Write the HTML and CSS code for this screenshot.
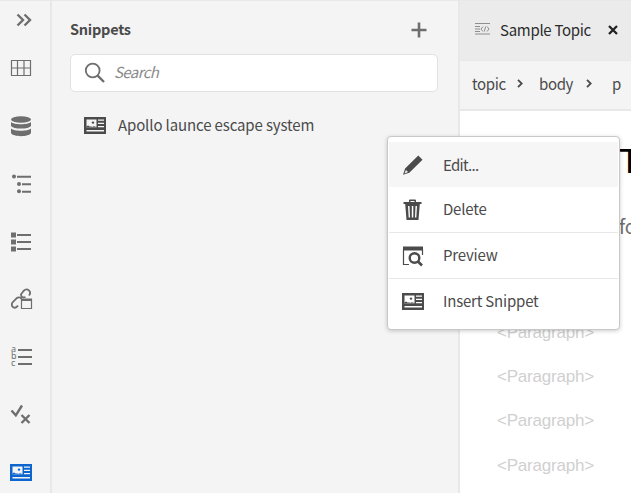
FILE: index.html
```html
<!DOCTYPE html>
<html lang="en">
<head>
<meta charset="utf-8">
<title>Snippets</title>
<link rel="stylesheet" href="styles.css">
</head>
<body>
<svg class="defs" width="0" height="0" aria-hidden="true">
  <symbol id="snippet" viewBox="0 0 22 17">
    <path fill="currentColor" fill-rule="evenodd" d="M0 0h22v17H0zM2.500 2.500v8h10v-8zM14 2.500v1.300h6V2.500zM14 5.800v1.300h6V5.800zM14 9v1.300h6V9zM2.500 13v1.400h17.500V13z"/>
    <path fill="currentColor" d="M2.500 10.500V9.300l1.600-.8L6 9.800l1-.5 1.200.6 1.500-.6 2.800.7v.5z"/>
    <circle cx="9" cy="5.600" r="1.200" fill="currentColor"/>
  </symbol>
</svg>
<div class="app">
  <nav class="rail">
    <div class="rail-item expand"><svg width="24" height="24" viewBox="0 0 24 24"><path d="M5.500 6.500 11 12l-5.500 5.500M12.500 6.500 18 12l-5.500 5.500" class="line thick"/></svg></div>
    <div class="rail-item"><svg width="24" height="24" viewBox="0 0 24 24"><path d="M2.500 4.500h19v15h-19zM2.500 12h19M8.500 4.500v15M15 4.500v15" class="line thin"/></svg></div>
    <div class="rail-item"><svg width="24" height="24" viewBox="0 0 24 24"><ellipse cx="12" cy="5.500" rx="10" ry="3.200"/><path d="M2 8c3 3 17 3 20 0v4c-2 3.400-18 3.400-20 0zM2 14.500c3 3 17 3 20 0v4.600c-2 4.200-18 4.200-20 0z"/></svg></div>
    <div class="rail-item"><svg width="24" height="24" viewBox="0 0 24 24"><circle cx="5" cy="4.500" r="2"/><circle cx="10" cy="12" r="2"/><circle cx="10" cy="19.300" r="2"/><path d="M8 3.800h14v2H8zM13 11.300h9v2h-9zM13 18.800h9v2h-9z"/></svg></div>
    <div class="rail-item"><svg width="24" height="24" viewBox="0 0 24 24"><path d="M2 2.500h5v5H2zM2 9.500h5v5H2zM2 16.500h5v5H2zM8 4h14v2H8zM8 11h14v2H8zM8 18h14v2H8z"/></svg></div>
    <div class="rail-item"><svg width="24" height="24" viewBox="0 0 24 24"><path d="m11.500 8 3-4c4-4 8.500 1 5.500 4.500M9 18.500c-3 4.500-8 1-5.500-3l4-4.200c2.500-2 5-.5 5 1M12 7.500c0 2.500 2 3.500 4.500 2.500" class="line"/><path d="M12.500 12.500h10v9h-10z" class="line thin"/><path d="M12 11.500h11v2.500H12z"/></svg></div>
    <div class="rail-item list">
      <div class="letters"><span>a</span><span>b</span><span>c</span></div>
      <svg width="14" height="24" viewBox="0 0 14 24"><path d="M0 4h14v2H0zM0 11h14v2H0zM0 18h14v2H0z"/></svg>
    </div>
    <div class="rail-item"><svg width="24" height="24" viewBox="0 0 24 24"><path d="m2.500 7.500 4.300 4.800L13 2.500M12.500 12l8 8M20.500 12l-8 8" class="line thick"/></svg></div>
    <div class="rail-item active"><svg width="22" height="17"><use href="#snippet"/></svg></div>
  </nav>

  <section class="panel">
    <header class="panel-head">
      <h2>Snippets</h2>
      <svg width="16" height="16" viewBox="0 0 16 16"><path d="M8 .5v15M.5 8h15" class="line plus"/></svg>
    </header>
    <div class="search">
      <svg width="22" height="22" viewBox="0 0 22 22"><circle cx="8.700" cy="8.500" r="6.900" class="line"/><path d="m13.500 13.500 6.500 6.500" class="line thick"/></svg>
      <span>Search</span>
    </div>
    <div class="snippet"><svg width="22" height="17"><use href="#snippet"/></svg><span>Apollo launce escape system</span></div>
  </section>

  <main class="editor">
    <div class="tabs">
      <svg width="15" height="12" viewBox="0 0 15 12"><path d="M0 .5h15M0 3.500h5M0 6h5M0 8.500h5M0 11h15M8 3.500 6 6l2 2.500M12 3.500 14 6l-2 2.500M10.700 3.500 9.300 8.500" class="line doc"/></svg>
      <span class="tab-name">Sample Topic</span>
      <svg width="10" height="10" viewBox="0 0 10 10"><path d="m1 1 8 8M9 1 1 9" class="line close"/></svg>
    </div>
    <div class="crumbs">
      <span class="topic">topic</span><svg width="6" height="9" viewBox="0 0 6 9"><path d="m1 .8 3.700 3.700L1 8.200" class="line"/></svg>
      <span class="body-crumb">body</span><svg width="6" height="9" viewBox="0 0 6 9"><path d="m1 .8 3.700 3.700L1 8.200" class="line"/></svg>
      <span class="p-crumb">p</span>
    </div>
    <article class="page">
      <h1>Topic</h1>
      <p class="desc">for</p>
      <p class="hint">&lt;Paragraph&gt;</p>
      <p class="hint">&lt;Paragraph&gt;</p>
      <p class="hint">&lt;Paragraph&gt;</p>
      <p class="hint">&lt;Paragraph&gt;</p>
    </article>
  </main>
</div>

<div class="menu">
  <div class="menu-item hover"><svg width="24" height="24" viewBox="0 0 24 24"><path fill-rule="evenodd" d="M17.300 2.500 21.500 6.700 8.300 19.800 2 21.800 4.100 15.600zM5 17l-1.600 3.400L7 19z"/></svg><span class="dots">Edit...</span></div>
  <div class="menu-item"><svg width="24" height="24" viewBox="0 0 24 24"><path fill-rule="evenodd" d="M8 4V2.500Q8 1.500 9 1.500h5q1 0 1 1V4h5.500v2h-1.700L17.500 22h-12L4.200 6H2.500V4zM9.500 3v1h4V3zM7 8l.7 11.500H9L8.500 8zM10.800 8v11.500h1.500V8zM14.500 8 14 19.500h1.300L16 8z"/></svg><span>Delete</span></div>
  <div class="menu-item divided"><svg width="24" height="24" viewBox="0 0 24 24"><path d="M2 2.500h20v4H2z"/><path d="M2.500 5v15.500H8M21.500 5v6" class="line thin"/><circle cx="13.500" cy="14" r="4.800" class="line thick"/><path d="m17 17.500 4 4" class="line plus"/></svg><span>Preview</span></div>
  <div class="menu-item divided"><svg width="24" height="17" viewBox="0 0 24 17"><use href="#snippet" x="1" width="22" height="17"/></svg><span>Insert Snippet</span></div>
</div>
</body>
</html>
```

FILE: styles.css
```css
* { box-sizing: border-box; }
body {
  margin: 0;
  width: 631px;
  height: 493px;
  overflow: hidden;
  background: #f4f4f4;
  color: #4b4b4b;
  font: 15px/20px "Noto Sans CJK JP", "Noto Sans", sans-serif;
  letter-spacing: -.13px;
}
svg { display: block; flex: none; fill: currentColor; }
.defs { position: absolute; }
.line { fill: none; stroke: currentColor; stroke-width: 1.8; }
.line.thin { stroke-width: 1.2; }
.line.thick { stroke-width: 2.4; }
.line.plus { stroke-width: 2.6; }
.line.doc { stroke-width: 1; }
.line.close { stroke-width: 2.3; }

.app {
  display: grid;
  grid-template-columns: 52px 408px 1fr;
  height: 493px;
  border-top: 1px solid #e8e8e8;
}
.rail { border-right: 2px solid #e8e8e8; color: #6e6e6e; }
.rail-item {
  display: flex;
  align-items: center;
  height: 57.7px;
  padding-left: 9px;
}
.rail-item.expand { height: 38.6px; padding-left: 12px; }
.rail-item.active { color: #0d66d0; padding-left: 10px; }
.rail-item.list { padding-left: 11px; }
.letters {
  display: grid;
  grid-auto-rows: 7px;
  width: 6px;
  margin: -2px 1px 0 0;
  font: 9px/7px "Noto Sans", sans-serif;
}

.panel { border-right: 2px solid #e8e8e8; padding: 0 20px 0 18px; }
.panel-head {
  display: flex;
  align-items: center;
  justify-content: space-between;
  height: 53px;
  padding: 4px 11px 0 0;
  color: #6e6e6e;
}
h2 { margin: -2px 0 0; font-size: 14.5px; line-height: 20px; letter-spacing: -.25px; font-weight: 700; color: #4b4b4b; }
.search {
  display: flex;
  align-items: center;
  gap: 8px;
  height: 38px;
  padding-left: 13px;
  border: 1px solid #e1e1e1;
  border-radius: 5px;
  background: #fff;
  color: #6e6e6e;
}
.search span { margin-top: -2px; font-style: italic; letter-spacing: -.6px; color: #8a8a8a; }
.snippet { display: flex; align-items: center; gap: 12px; padding: 23px 0 0 14px; }

.editor { min-width: 0; overflow: hidden; background: #fff; }
.tabs {
  display: flex;
  align-items: center;
  height: 59px;
  padding: 0 0 1px 15px;
  background: #ebebeb;
  color: #8e8e8e;
}
.tabs svg:first-child { margin-bottom: 3px; }
.tab-name { width: 108px; margin-left: 10px; letter-spacing: -.3px; color: #2c2c2c; white-space: nowrap; }
.tabs svg:last-child { color: #222; }
.crumbs {
  display: flex;
  align-items: center;
  height: 51px;
  padding-left: 12px;
  background: #f4f4f4;
  border-top: 1px solid #e8e8e8;
  border-bottom: 2px solid #e8e8e8;
}
.crumbs span { margin-top: -2px; white-space: nowrap; letter-spacing: -.35px; }
.crumbs svg { margin-top: -3px; }
.crumbs .topic { width: 45px; }
.crumbs .body-crumb { width: 47px; margin-left: 16px; }
.crumbs .p-crumb { margin-left: 20px; }
.page { padding-left: 37px; }
h1 { margin: 0; padding: 27px 0 1px 122px; font: 400 35px/46px "Liberation Sans", Arial, sans-serif; color: #000; }
.desc { margin: 0; padding: 22px 0 0 122px; font-size: 19px; line-height: 37px; color: #6e6e6e; }
.hint {
  margin: 0;
  height: 44.2px;
  font: 17px/44px "Liberation Sans", Arial, sans-serif;
  letter-spacing: -.2px;
  color: #d0d0d0;
}
.desc + .hint { margin-top: 67px; }

.menu {
  position: absolute;
  left: 387px;
  top: 136px;
  width: 233px;
  height: 194px;
  padding: 5px 1px;
  background: #fff;
  border: 1px solid #c8c8c8;
  border-radius: 4px;
  box-shadow: 0 1px 4px rgba(0, 0, 0, .2);
}
.menu-item { display: flex; align-items: center; gap: 18px; height: 45px; padding-left: 12px; }
.menu-item span { margin-top: -2px; letter-spacing: -.2px; }
.menu-item .dots { margin-top: 0; letter-spacing: -.7px; }
.menu-item.hover { background: #f6f6f6; }
.menu-item.divided { height: 46px; border-top: 1px solid #e8e8e8; }
```
